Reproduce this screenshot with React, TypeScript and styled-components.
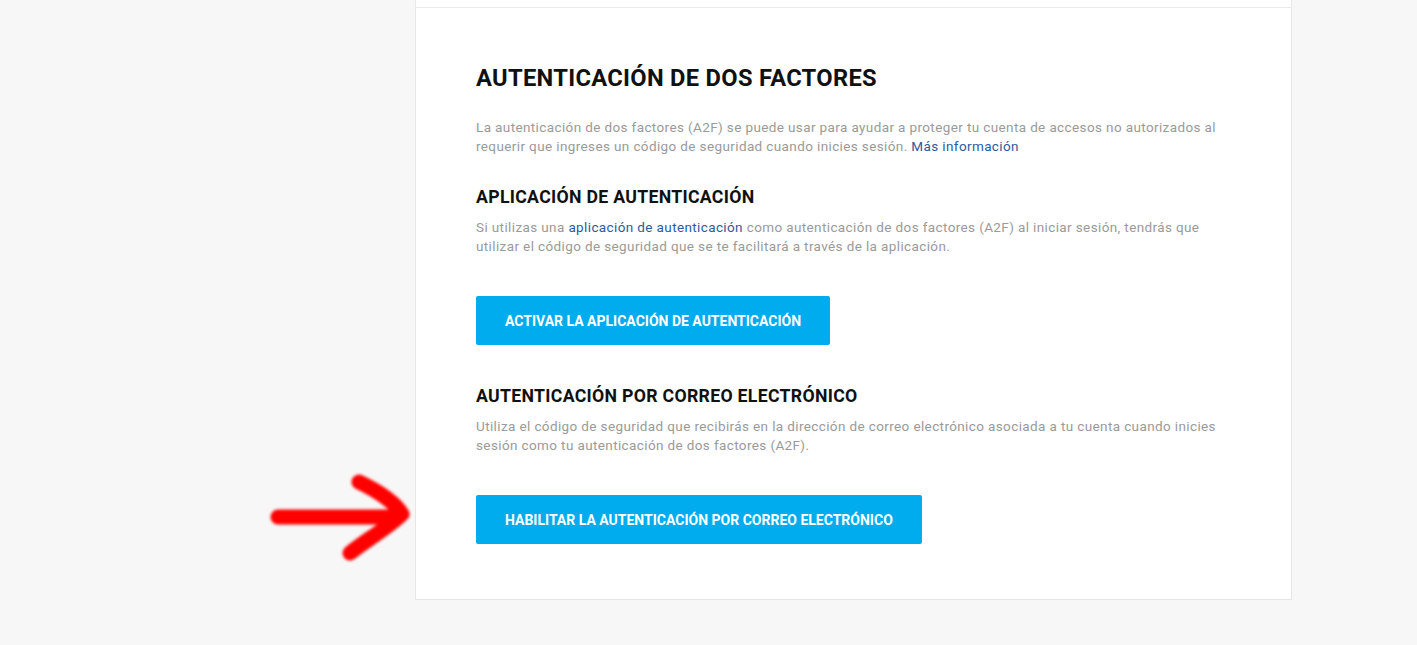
import styled, { createGlobalStyle } from 'styled-components'

const GlobalStyle = createGlobalStyle`
  html, body {
    margin: 0;
    padding: 0;
    background: #f7f7f7;
  }
  body {
    font-family: 'Roboto', 'Liberation Sans', sans-serif;
  }
`

const Page = styled.div`
  position: relative;
  width: 1417px;
  height: 645px;
  background: #f7f7f7;
`

const Column = styled.div`
  width: 877px;
  margin-left: 415px;
  display: flex;
  flex-direction: column;
`

const PrevCard = styled.div`
  height: 7px;
  background: #fff;
  border: 1px solid #e9e9e9;
  border-top: none;
`

const Card = styled.section`
  background: #fff;
  border: 1px solid #e6e6e6;
  border-top: none;
  height: 592px;
  box-sizing: border-box;
  padding: 55px 60px 0;
`

const Title = styled.h2`
  margin: 0;
  font-family: 'Roboto', sans-serif;
  font-weight: 700;
  font-size: 23.7px;
  line-height: 30px;
  color: #111;
  letter-spacing: 0.3px;
`

const SubTitle = styled.h3`
  margin: 0;
  font-family: 'Roboto', sans-serif;
  font-weight: 700;
  font-size: 17.7px;
  line-height: 24px;
  color: #111;
  letter-spacing: 0.3px;
`

const Text = styled.p<{ $top: number }>`
  margin: ${p => p.$top}px 0 0;
  font-family: 'Roboto', sans-serif;
  font-size: 13.5px;
  line-height: 19px;
  color: #9a9a9a;
  letter-spacing: 0.38px;
  white-space: nowrap;
`

const Link = styled.a`
  color: #2b5b9e;
  text-decoration: none;
`

const Section = styled.div<{ $top: number }>`
  margin-top: ${p => p.$top}px;
`

const Button = styled.button<{ $top: number }>`
  display: block;
  margin-top: ${p => p.$top}px;
  height: 49px;
  padding: 0 29px;
  border: none;
  border-radius: 2px;
  background: #00aced;
  color: #fff;
  font-family: 'Roboto', sans-serif;
  font-weight: 700;
  font-size: 14px;
  letter-spacing: 0;
  cursor: pointer;
`

const Arrow = styled.svg`
  position: absolute;
  left: 262px;
  top: 466px;
`

const RedArrow = () => (
  <Arrow width="160" height="100" viewBox="0 0 160 100">
    <defs>
      <filter id="soft" x="-20%" y="-20%" width="140%" height="140%">
        <feGaussianBlur stdDeviation="1.6" />
      </filter>
    </defs>
    <g
      filter="url(#soft)"
      stroke="#ff0606"
      strokeWidth="15"
      strokeLinecap="round"
      strokeLinejoin="round"
      fill="none"
    >
      <path d="M16 51 L132 51" />
      <path d="M97 16 C118 26 134 38 140 48 C126 62 104 74 88 87" />
    </g>
  </Arrow>
)

export default function App() {
  return (
    <Page>
      <GlobalStyle />
      <Column>
        <PrevCard />
        <Card>
          <Title>AUTENTICACIÓN DE DOS FACTORES</Title>
          <Text $top={25}>
            La autenticación de dos factores (A2F) se puede usar para ayudar a proteger tu cuenta de accesos no autorizados al
            <br />
            requerir que ingreses un código de seguridad cuando inicies sesión. <Link href="#">Más información</Link>
          </Text>
          <Section $top={29}>
            <SubTitle>APLICACIÓN DE AUTENTICACIÓN</SubTitle>
            <Text $top={9}>
              Si utilizas una <Link href="#">aplicación de autenticación</Link> como autenticación de dos factores (A2F) al iniciar sesión, tendrás que
              <br />
              utilizar el código de seguridad que se te facilitará a través de la aplicación.
            </Text>
            <Button $top={40}>ACTIVAR LA APLICACIÓN DE AUTENTICACIÓN</Button>
          </Section>
          <Section $top={39}>
            <SubTitle>AUTENTICACIÓN POR CORREO ELECTRÓNICO</SubTitle>
            <Text $top={9}>
              Utiliza el código de seguridad que recibirás en la dirección de correo electrónico asociada a tu cuenta cuando inicies
              <br />
              sesión como tu autenticación de dos factores (A2F).
            </Text>
            <Button $top={40}>HABILITAR LA AUTENTICACIÓN POR CORREO ELECTRÓNICO</Button>
          </Section>
        </Card>
      </Column>
      <RedArrow />
    </Page>
  )
}
